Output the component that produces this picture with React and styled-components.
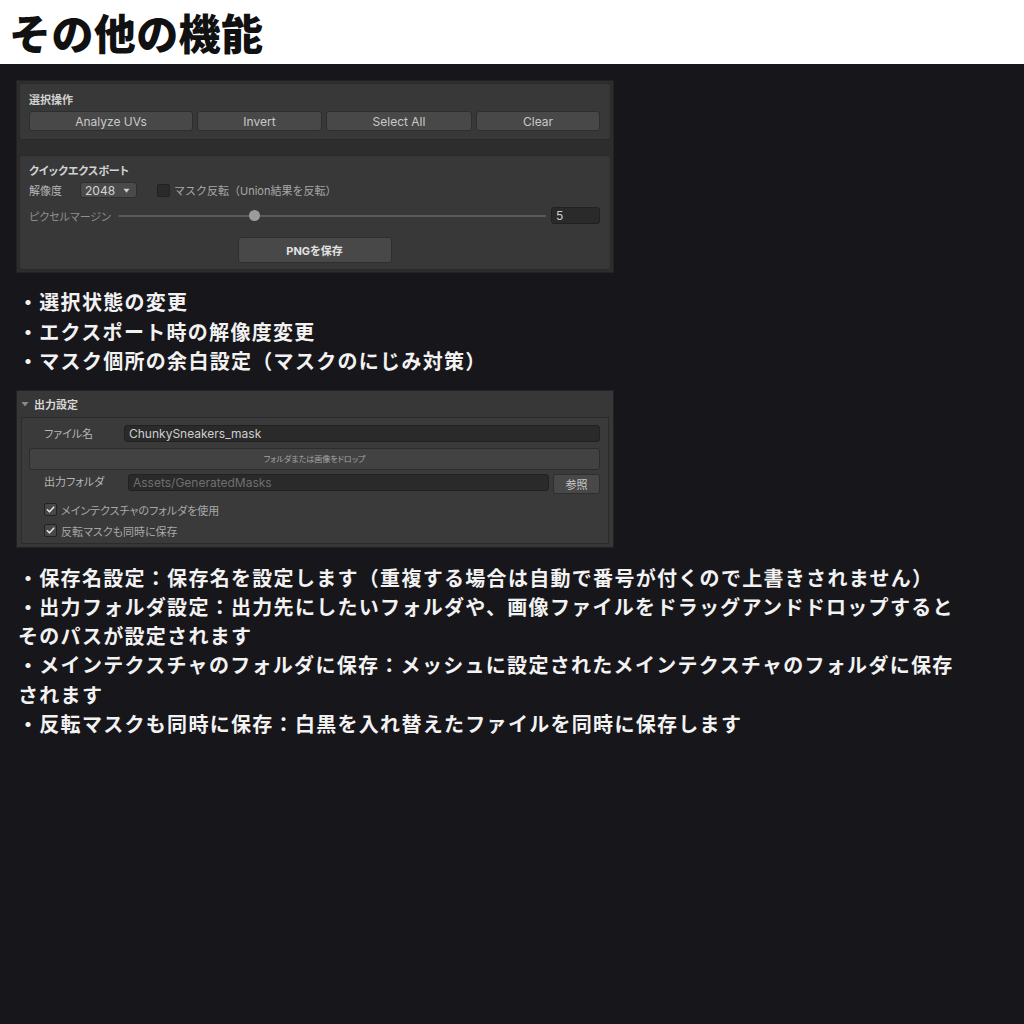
import React from 'react';
import styled, { createGlobalStyle } from 'styled-components';

const GlobalStyle = createGlobalStyle`
  body {
    margin: 0;
    background: #17161b;
  }
`;

const Page = styled.div`
  width: 1024px;
  min-height: 1024px;
  background: #17161b;
  font-family: "Noto Sans CJK JP", sans-serif;
`;

const Header = styled.header`
  height: 64px;
  background: #ffffff;
  display: flex;
  align-items: center;
  padding-left: 9px;
`;

const Title = styled.h1`
  margin: 0;
  font-size: 42px;
  font-weight: 900;
  line-height: 1;
  letter-spacing: 0.4px;
  color: #111111;
`;

const Content = styled.main`
  padding: 16px 0 0 16px;
`;

/* ---------- unity-ish inspector panels ---------- */

const Panel = styled.section`
  width: 598px;
  box-sizing: border-box;
  border: 1px solid #222222;
  background: ${({ light }) => (light ? '#373737' : '#2d2d2d')};
  padding: ${({ light }) => (light ? '0' : '2px')};
  display: flex;
  flex-direction: column;
  gap: ${({ light }) => (light ? 0 : 15)}px;
  font-family: Inter, "Noto Sans CJK JP", sans-serif;
  font-feature-settings: "palt";
  font-size: 11px;
  color: #c4c4c4;
`;

const Box = styled.div`
  background: #383838;
  border: 1px solid #2a2a2a;
  border-radius: 3px;
  padding: 8px 10px 6px 9px;
  display: flex;
  flex-direction: column;
`;

const BoxTitle = styled.div`
  height: 14px;
  line-height: 14px;
  font-weight: 700;
  color: #d2d2d2;
  margin-top: ${({ top }) => top || 0}px;
`;

const ButtonRow = styled.div`
  display: flex;
  gap: 4px;
  margin-top: 4px;
  margin-bottom: 2px;
`;

const Button = styled.div`
  width: ${({ w }) => w}px;
  height: ${({ h }) => h || 20}px;
  box-sizing: border-box;
  background: #484848;
  border: 1px solid #2e2e2e;
  border-radius: 3px;
  display: flex;
  align-items: center;
  justify-content: center;
  font-size: ${({ small }) => (small ? 11 : 12)}px;
  font-weight: ${({ bold }) => (bold ? 700 : 400)};
  color: ${({ bold }) => (bold ? '#e2e2e2' : '#c8c8c8')};
  flex-shrink: 0;
`;

const Row = styled.div`
  display: flex;
  align-items: center;
  height: ${({ h }) => h}px;
  margin-top: ${({ top }) => top}px;
`;

const FieldLabel = styled.div`
  width: ${({ w }) => w}px;
  padding-left: ${({ indent }) => indent || 0}px;
  box-sizing: border-box;
  flex-shrink: 0;
  color: ${({ dim }) => (dim ? '#8e8e8e' : '#b6b6b6')};
  white-space: nowrap;
  line-height: ${({ lh }) => (lh ? `${lh}px` : 'normal')};
`;

const Dropdown = styled.div`
  width: 57px;
  height: 16px;
  box-sizing: border-box;
  background: #4a4a4a;
  border: 1px solid #2e2e2e;
  border-radius: 3px;
  display: flex;
  align-items: center;
  justify-content: space-between;
  padding: 0 6px 0 4px;
  font-size: 12px;
  color: #d4d4d4;
`;

const Toggle = styled.div`
  width: 13px;
  height: 13px;
  box-sizing: border-box;
  background: ${({ checked }) => (checked ? '#474747' : '#2a2a2a')};
  border: 1px solid #222222;
  border-radius: 2px;
  display: flex;
  align-items: center;
  justify-content: center;
  margin-left: ${({ left }) => left || 0}px;
  margin-right: 4px;
  flex-shrink: 0;
`;

const ToggleLabel = styled.div`
  color: #a8a8a8;
  white-space: nowrap;
  font-feature-settings: ${({ wide }) => (wide ? 'normal' : '"palt"')};
`;

const SliderTrack = styled.div`
  position: relative;
  flex: 1;
  height: 2px;
  background: #5a5a5a;
  border-radius: 1px;
  margin-right: 5px;
`;

const SliderThumb = styled.div`
  position: absolute;
  top: -5px;
  left: ${({ pos }) => pos}%;
  margin-left: -5px;
  width: 11px;
  height: 11px;
  border-radius: 50%;
  background: #9c9c9c;
`;

const TextField = styled.div`
  width: ${({ w }) => (w ? `${w}px` : 'auto')};
  flex: ${({ w }) => (w ? '0 0 auto' : '1')};
  height: 17px;
  box-sizing: border-box;
  background: #2a2a2a;
  border: 1px solid #212121;
  border-radius: 3px;
  padding-left: 4px;
  display: flex;
  align-items: center;
  font-size: 12px;
  color: ${({ muted }) => (muted ? '#6f6f6f' : '#cfcfcf')};
  white-space: nowrap;
  overflow: hidden;
`;

const Centered = styled.div`
  display: flex;
  justify-content: center;
  margin-top: 13px;
`;

const FoldHeader = styled.div`
  height: 26px;
  display: flex;
  align-items: center;
  padding-left: 4px;
  gap: 5px;
  font-weight: 700;
  color: #d6d6d6;
`;

const InnerBox = styled.div`
  margin: 0 4px 3px 4px;
  background: #3a3a3a;
  border: 1px solid #2b2b2b;
  padding: 7px 8px 3px 7px;
  display: flex;
  flex-direction: column;
`;

const DropZone = styled.div`
  margin-top: 6px;
  height: 22px;
  box-sizing: border-box;
  background: #424242;
  border: 1px solid #2c2c2c;
  border-radius: 3px;
  display: flex;
  align-items: center;
  justify-content: center;
  font-size: 8px;
  color: #a4a4a4;
`;

const FolderRow = styled.div`
  display: flex;
  align-items: flex-start;
  gap: 4px;
  margin-top: 4px;
  height: 20px;
`;

/* ---------- text ---------- */

const BulletList = styled.div`
  margin: ${({ top }) => top}px 0 14px 2px;
  font-size: 20px;
  font-weight: 700;
  letter-spacing: 1.3px;
  line-height: ${({ lh }) => lh}px;
  color: #f2f2f2;
  white-space: nowrap;
`;

const Check = () => (
  <svg width="9" height="9" viewBox="0 0 10 10">
    <path d="M1.5 5.2 L4 7.6 L8.6 2.4" fill="none" stroke="#e4e4e4" strokeWidth="1.7" strokeLinecap="round" strokeLinejoin="round" />
  </svg>
);

const Arrow = ({ color = '#d0d0d0', size = 7 }) => (
  <svg width={size} height={size} viewBox="0 0 8 8">
    <path d="M0.5 2 L7.5 2 L4 6.5 Z" fill={color} />
  </svg>
);

export default function App() {
  return (
    <Page>
      <GlobalStyle />
      <Header>
        <Title>その他の機能</Title>
      </Header>

      <Content>
        <Panel>
          <Box>
            <BoxTitle top={1}>選択操作</BoxTitle>
            <ButtonRow>
              <Button w={164}>Analyze UVs</Button>
              <Button w={125}>Invert</Button>
              <Button w={146}>Select All</Button>
              <Button w={124}>Clear</Button>
            </ButtonRow>
          </Box>

          <Box>
            <BoxTitle>クイックエクスポート</BoxTitle>
            <Row h={16} top={4}>
              <FieldLabel w={51}>解像度</FieldLabel>
              <Dropdown>
                2048
                <Arrow />
              </Dropdown>
              <Toggle left={20} />
              <ToggleLabel wide>マスク反転（Union結果を反転）</ToggleLabel>
            </Row>
            <Row h={17} top={9}>
              <FieldLabel w={89} dim>ピクセルマージン</FieldLabel>
              <SliderTrack>
                <SliderThumb pos={31.8} />
              </SliderTrack>
              <TextField w={49}>5</TextField>
            </Row>
            <Centered>
              <Button w={154} h={26} bold small>PNGを保存</Button>
            </Centered>
          </Box>
        </Panel>

        <BulletList top={14} lh={29.5}>
          ・選択状態の変更<br />
          ・エクスポート時の解像度変更<br />
          ・マスク個所の余白設定（マスクのにじみ対策）
        </BulletList>

        <Panel light>
          <FoldHeader>
            <Arrow color="#8a8a8a" size={8} />
            出力設定
          </FoldHeader>
          <InnerBox>
            <Row h={17} top={0}>
              <FieldLabel w={95} indent={15}>ファイル名</FieldLabel>
              <TextField>ChunkySneakers_mask</TextField>
            </Row>
            <DropZone>フォルダまたは画像をドロップ</DropZone>
            <FolderRow>
              <FieldLabel w={95} indent={15} lh={17}>出力フォルダ</FieldLabel>
              <TextField muted>Assets/GeneratedMasks</TextField>
              <Button w={47} small>参照</Button>
            </FolderRow>
            <Row h={18} top={7}>
              <Toggle left={15} checked><Check /></Toggle>
              <ToggleLabel>メインテクスチャのフォルダを使用</ToggleLabel>
            </Row>
            <Row h={18} top={3}>
              <Toggle left={15} checked><Check /></Toggle>
              <ToggleLabel>反転マスクも同時に保存</ToggleLabel>
            </Row>
          </InnerBox>
        </Panel>

        <BulletList top={15} lh={29.3}>
          ・保存名設定：保存名を設定します（重複する場合は自動で番号が付くので上書きされません）<br />
          ・出力フォルダ設定：出力先にしたいフォルダや、画像ファイルをドラッグアンドドロップすると<br />
          そのパスが設定されます<br />
          ・メインテクスチャのフォルダに保存：メッシュに設定されたメインテクスチャのフォルダに保存<br />
          されます<br />
          ・反転マスクも同時に保存：白黒を入れ替えたファイルを同時に保存します
        </BulletList>
      </Content>
    </Page>
  );
}
